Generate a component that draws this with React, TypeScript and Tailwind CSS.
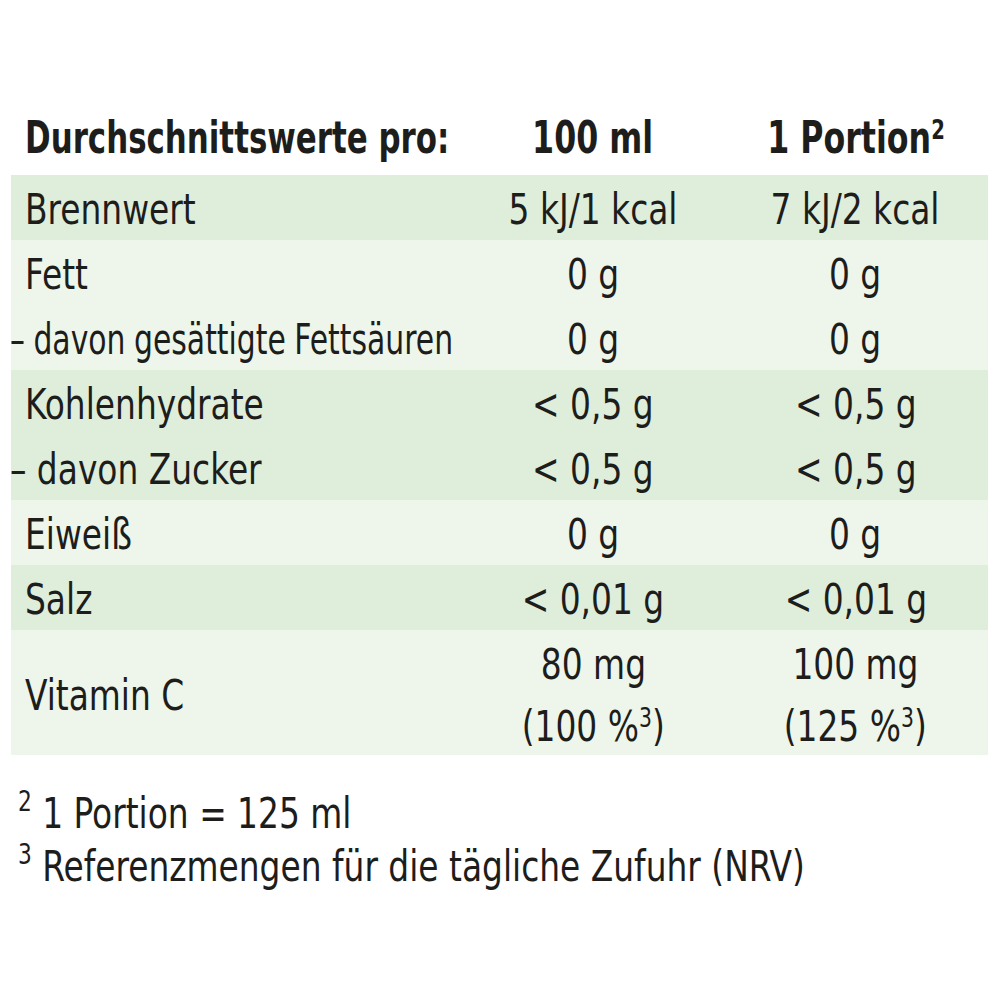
import React from "react";

const font = { fontFamily: '"DejaVu Sans Condensed", "DejaVu Sans", sans-serif' };

function Sup({ children }: { children: React.ReactNode }) {
  return <span className="relative top-[-0.5em] text-[0.62em] leading-none">{children}</span>;
}
function FSup({ children }: { children: React.ReactNode }) {
  return <span className="relative top-[-0.6em] text-[0.66em] leading-none">{children}</span>;
}

function L({ children, narrow }: { children: React.ReactNode; narrow?: boolean }) {
  return (
    <span className={narrow ? "inline-block whitespace-nowrap origin-left scale-x-[0.79] [word-spacing:-0.03em]" : "inline-block whitespace-nowrap origin-left scale-x-[0.87]"}>
      {children}
    </span>
  );
}
function C({ children }: { children: React.ReactNode }) {
  return <span className="inline-block whitespace-nowrap origin-center scale-x-[0.87]">{children}</span>;
}

type Row = { label: React.ReactNode; sub?: boolean; narrow?: boolean; a: React.ReactNode; b: React.ReactNode };

function RowView({ r }: { r: Row }) {
  return (
    <div className="grid grid-cols-[452px_260px_1fr] h-[65px] items-center pt-[5px]">
      <div className={r.sub ? "-ml-[1px]" : "pl-[14px]"}><L narrow={r.narrow}>{r.label}</L></div>
      <div className="text-center"><C>{r.a}</C></div>
      <div className="text-center"><C>{r.b}</C></div>
    </div>
  );
}

export default function App() {
  const dark = "bg-[#dfeedb]";
  const light = "bg-[#eef6eb]";
  return (
    <div className="w-[1000px] h-[1000px] bg-white text-[#1d1d1b] text-[42px] leading-none" style={font}>
      <div className="pt-[116px]">
        <div className="grid grid-cols-[452px_260px_1fr] h-[59px] items-start font-bold ml-[11px] w-[977px] text-[44px]">
          <div className="pl-[14px]"><span className="inline-block whitespace-nowrap origin-left scale-x-[0.78]">Durchschnittswerte pro:</span></div>
          <div className="text-center"><span className="inline-block whitespace-nowrap scale-x-[0.8]">100 ml</span></div>
          <div className="text-center"><span className="inline-block whitespace-nowrap scale-x-[0.8]">1 Portion<Sup>2</Sup></span></div>
        </div>
        <div className="ml-[11px] w-[977px]">
          <div className={dark}>
            <RowView r={{ label: "Brennwert", a: "5 kJ/1 kcal", b: "7 kJ/2 kcal" }} />
          </div>
          <div className={light}>
            <RowView r={{ label: "Fett", a: "0 g", b: "0 g" }} />
            <RowView r={{ label: "– davon gesättigte Fettsäuren", sub: true, narrow: true, a: "0 g", b: "0 g" }} />
          </div>
          <div className={dark}>
            <RowView r={{ label: "Kohlenhydrate", a: "< 0,5 g", b: "< 0,5 g" }} />
            <RowView r={{ label: "– davon Zucker", sub: true, a: "< 0,5 g", b: "< 0,5 g" }} />
          </div>
          <div className={light}>
            <RowView r={{ label: "Eiweiß", a: "0 g", b: "0 g" }} />
          </div>
          <div className={dark}>
            <RowView r={{ label: "Salz", a: "< 0,01 g", b: "< 0,01 g" }} />
          </div>
          <div className={light}>
            <div className="grid grid-cols-[452px_260px_1fr] h-[125px] items-center pt-[6px]">
              <div className="pl-[14px]"><L>Vitamin C</L></div>
              <div className="text-center flex flex-col items-center gap-[20px]">
                <C>80 mg</C>
                <C>(100 %<Sup>3</Sup>)</C>
              </div>
              <div className="text-center flex flex-col items-center gap-[20px]">
                <C>100 mg</C>
                <C>(125 %<Sup>3</Sup>)</C>
              </div>
            </div>
          </div>
        </div>
        <div className="pl-[18px] pt-[38px] flex flex-col gap-[11px]">
          <div><L><FSup>2</FSup> 1 Portion = 125 ml</L></div>
          <div><L><FSup>3</FSup> Referenzmengen für die tägliche Zufuhr (NRV)</L></div>
        </div>
      </div>
    </div>
  );
}
